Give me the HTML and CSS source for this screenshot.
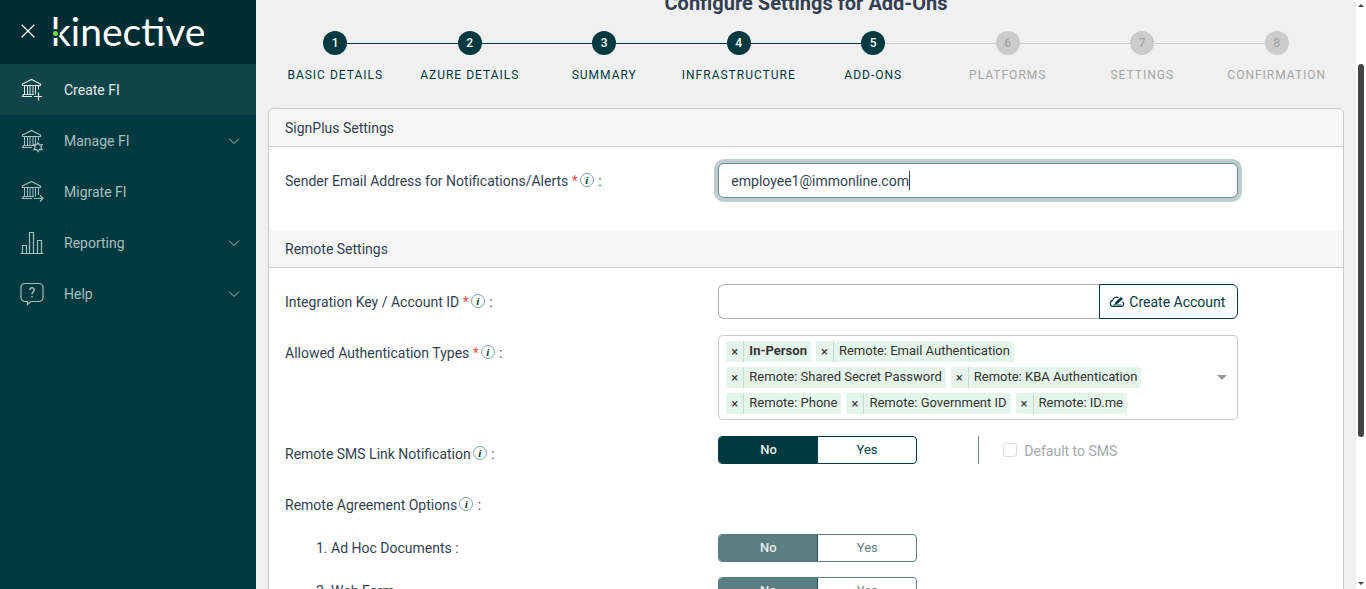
FILE: index.html
```html
<!DOCTYPE html>
<html lang="en">
<head>
    <meta charset="UTF-8">
    <meta name="viewport" content="width=device-width, initial-scale=1.0">
    <title>Create FI - Add-Ons</title>
    <link rel="stylesheet" href="styles.css">
</head>
<body>
    <!-- shared icon shapes -->
    <svg class="sprite" aria-hidden="true">
        <symbol id="bank" viewBox="0 0 24 25">
            <path d="M2.5 8.5V7L11.5 2.5L20.5 7V8.5H2.5Z"/>
            <path d="M4.5 8.500v9M7.500 8.500v9M10 8.500v9M13 8.500v9M15.500 8.500v9M18.500 8.500v4" stroke-width="1"/>
            <path d="M14 17.500H3.500L2.500 19.500H12"/>
        </symbol>
        <symbol id="chevron" viewBox="0 0 12 8">
            <path d="M1 1.5l5 5 5-5"/>
        </symbol>
    </svg>

    <div class="layout">
        <aside class="sidebar">
            <div class="brand">
                <button class="close-btn" type="button" aria-label="Close menu">
                    <svg width="14" height="14" viewBox="0 0 14 14"><path d="M0.7 0.7l12.6 12.6M13.3 0.7L0.7 13.3"/></svg>
                </button>
                <a class="logo" href="#">kinective<span class="logo-dot"></span></a>
            </div>
            <nav class="menu">
                <a class="menu-item active" href="#">
                    <svg class="menu-icon" viewBox="0 0 24 25"><use href="#bank"/><path d="M14 19.500h8M18.500 15.500v8"/></svg>
                    <span>Create FI</span>
                </a>
                <a class="menu-item" href="#">
                    <svg class="menu-icon" viewBox="0 0 24 25"><use href="#bank"/><path d="M18 14.500l1.400 2.300 2.700-.1-1.300 2.400 1.300 2.400-2.700-.1-1.400 2.300-1.400-2.300-2.700.1 1.300-2.400-1.300-2.400 2.700.1z"/></svg>
                    <span>Manage FI</span>
                    <svg class="chevron" viewBox="0 0 12 8"><use href="#chevron"/></svg>
                </a>
                <a class="menu-item" href="#">
                    <svg class="menu-icon" viewBox="0 0 24 25"><use href="#bank"/><path d="M18.500 12v4M14 19.500h9M20 16.500l3 3-3 3"/></svg>
                    <span>Migrate FI</span>
                </a>
                <a class="menu-item" href="#">
                    <svg class="menu-icon" viewBox="0 0 24 25"><path d="M.5 23.500h23M2.500 23.500v-8h4v8M9.500 23.500v-21h4v21M17.500 23.500v-13h4v13"/></svg>
                    <span>Reporting</span>
                    <svg class="chevron" viewBox="0 0 12 8"><use href="#chevron"/></svg>
                </a>
                <a class="menu-item" href="#">
                    <svg class="menu-icon" viewBox="0 0 24 25"><path d="M5 2.500h14a4 4 0 0 1 4 4v10a4 4 0 0 1-4 4h-8L7.500 23.500v-3H5a4 4 0 0 1-4-4v-10a4 4 0 0 1 4-4z"/><path d="M9.800 9a2.200 2.200 0 1 1 3.600 1.600q-1.400 1-1.400 2.600M12 15v1.500" stroke-width="1.500"/></svg>
                    <span>Help</span>
                    <svg class="chevron" viewBox="0 0 12 8"><use href="#chevron"/></svg>
                </a>
            </nav>
        </aside>

        <main class="content">
            <h1 class="page-title">Configure Settings for Add-Ons</h1>

            <ol class="steps">
                <li class="step done"><span class="step-number">1</span>Basic Details</li>
                <li class="step done"><span class="step-number">2</span>Azure Details</li>
                <li class="step done"><span class="step-number">3</span>Summary</li>
                <li class="step done"><span class="step-number">4</span>Infrastructure</li>
                <li class="step done"><span class="step-number">5</span>Add-Ons</li>
                <li class="step"><span class="step-number">6</span>Platforms</li>
                <li class="step"><span class="step-number">7</span>Settings</li>
                <li class="step"><span class="step-number">8</span>Confirmation</li>
            </ol>

            <form class="card">
                <h2 class="card-header">SignPlus Settings</h2>
                <div class="card-body">
                    <div class="row">
                        <label class="row-label" for="sender">Sender Email Address for Notifications/Alerts <span class="required">*</span><span class="info">i</span> :</label>
                        <div class="field focused">
                            <input class="text-input" id="sender" type="email" value="employee1@immonline.com">
                            <span class="caret"></span>
                        </div>
                    </div>
                </div>

                <h2 class="card-header">Remote Settings</h2>
                <div class="card-body">
                    <div class="row">
                        <label class="row-label" for="account">Integration Key / Account ID <span class="required">*</span><span class="info">i</span> :</label>
                        <div class="field input-group">
                            <input class="text-input" id="account" type="text">
                            <button class="create-btn" type="button">
                                <svg width="16" height="12" viewBox="0 0 16 12">
                                    <path d="M9.500 1.700A4 4 0 0 0 3.600 4.300 3.200 3.200 0 0 0 3.800 10.500H12.300A2.500 2.500 0 0 0 13.400 5.800" fill="none" stroke="currentColor" stroke-width="1.200"/>
                                    <path d="M5.500 8.800l1-2.700L11.900 1l2.200 1.700-5.500 5.100z" fill="currentColor"/>
                                    <path d="M4 9h8.500" stroke="currentColor"/>
                                </svg>
                                Create Account
                            </button>
                        </div>
                    </div>

                    <div class="row">
                        <span class="row-label" id="auth-label">Allowed Authentication Types <span class="required">*</span><span class="info">i</span> :</span>
                        <div class="field multi-select" role="group" aria-labelledby="auth-label">
                            <ul class="chips">
                                <li class="chip locked"><button type="button">×</button><span>In-Person</span></li>
                                <li class="chip"><button type="button">×</button><span>Remote: Email Authentication</span></li>
                                <li class="chip"><button type="button">×</button><span>Remote: Shared Secret Password</span></li>
                                <li class="chip"><button type="button">×</button><span>Remote: KBA Authentication</span></li>
                                <li class="chip"><button type="button">×</button><span>Remote: Phone</span></li>
                                <li class="chip"><button type="button">×</button><span>Remote: Government ID</span></li>
                                <li class="chip"><button type="button">×</button><span>Remote: ID.me</span></li>
                            </ul>
                            <button class="open-btn" type="button" aria-label="Show options"></button>
                        </div>
                    </div>

                    <div class="row">
                        <span class="row-label">Remote SMS Link Notification<span class="info">i</span> :</span>
                        <div class="field split">
                            <div class="toggle">
                                <button class="selected" type="button">No</button>
                                <button type="button">Yes</button>
                            </div>
                            <label class="sms-default"><input type="checkbox" disabled><span>Default to SMS</span></label>
                        </div>
                    </div>

                    <div class="row">
                        <span class="row-label">Remote Agreement Options<span class="info">i</span> :</span>
                    </div>

                    <div class="sub-rows">
                        <div class="row">
                            <span class="sub-label">1. Ad Hoc Documents :</span>
                            <div class="toggle disabled">
                                <button class="selected" type="button" disabled>No</button>
                                <button type="button" disabled>Yes</button>
                            </div>
                        </div>
                        <div class="row">
                            <span class="sub-label">2. Web Form</span>
                            <div class="toggle disabled">
                                <button class="selected" type="button" disabled>No</button>
                                <button type="button" disabled>Yes</button>
                            </div>
                        </div>
                    </div>
                </div>
            </form>
        </main>

        <div class="scrollbar">
            <span class="arrow-up"></span>
            <div class="track"><div class="thumb"></div></div>
            <span class="arrow-down"></span>
        </div>
    </div>
</body>
</html>
```

FILE: styles.css
```css
* {
    box-sizing: border-box;
}

body {
    margin: 0;
    font-family: Roboto, "Liberation Sans", sans-serif;
    font-size: 14px;
    line-height: 21px;
    color: #343f52;
    background-color: #f0f0f0;
}

button,
input {
    font: inherit;
    color: inherit;
}

button {
    padding: 0;
    border: none;
    background: none;
    cursor: pointer;
}

a {
    color: inherit;
    text-decoration: none;
}

ol,
ul {
    margin: 0;
    padding: 0;
    list-style: none;
}

.sprite {
    display: none;
}

.layout {
    display: flex;
    height: 100vh;
    overflow: hidden;
}

/* Sidebar */
.sidebar {
    flex: 0 0 256px;
    background-color: #003a40;
    color: #a6bdbf;
}

.brand {
    display: flex;
    align-items: center;
    gap: 16px;
    height: 64px;
    padding: 0 0 2px 21px;
    background-color: #002c34;
    color: #fff;
}

.close-btn {
    display: flex;
}

.close-btn svg {
    fill: none;
    stroke: #fff;
    stroke-width: 1.3;
}

.logo {
    position: relative;
    font-family: Lato, sans-serif;
    font-size: 39px;
    line-height: 62px;
}

/* green node on the stem of the k */
.logo-dot {
    position: absolute;
    left: 0;
    top: 29px;
    width: 9px;
    height: 9px;
    border: 2px solid #002c34;
    border-radius: 50%;
    background-color: #6fdc4b;
}

.menu-item {
    display: flex;
    align-items: center;
    gap: 20px;
    height: 51px;
    padding: 0 16px 0 20px;
    line-height: 22px;
}

.menu-item span {
    padding-top: 1px;
}

.menu-item.active {
    background-color: #0f4449;
    color: #e3eaeb;
}

.menu-icon {
    width: 24px;
    height: 25px;
    fill: none;
    stroke: currentColor;
    stroke-width: 1.2;
}

.chevron {
    width: 12px;
    height: 8px;
    margin-left: auto;
    fill: none;
    stroke: currentColor;
    stroke-width: 1;
}

/* Page */
.content {
    flex: 1;
    min-width: 0;
    padding: 0 12px;
}

.page-title {
    margin: -9px 0 16px;
    font-size: 20px;
    line-height: 24px;
    font-weight: 700;
    text-align: center;
}

.steps {
    display: flex;
    margin-bottom: 22px;
}

.step {
    position: relative;
    flex: 1;
    display: flex;
    flex-direction: column;
    align-items: center;
    gap: 10px;
    font-size: 12px;
    letter-spacing: 1px;
    text-transform: uppercase;
    color: #a6a6a6;
}

.step-number {
    position: relative;
    z-index: 1;
    width: 24px;
    height: 24px;
    border-radius: 50%;
    background-color: #ccc;
    line-height: 25px;
    letter-spacing: 0;
    font-weight: 500;
    text-align: center;
}

.step::before {
    content: "";
    position: absolute;
    top: 12px;
    right: 50%;
    width: 100%;
    height: 1px;
    background-color: #ccc;
}

.step:first-child::before {
    display: none;
}

.step.done {
    color: #003a40;
}

.step.done::before,
.step.done .step-number {
    background-color: #003a40;
}

.step.done .step-number {
    color: #fff;
}

/* Card */
.card {
    border: 1px solid #c9cbce;
    border-radius: 6px 6px 0 0;
    background-color: #fff;
    overflow: hidden;
}

.card-header {
    margin: 0;
    padding: 9px 16px 7px;
    border-bottom: 1px solid #c9cbce;
    background-color: #f7f7f7;
    font-size: 14px;
    line-height: 21px;
    font-weight: 400;
}

.card-body {
    display: flex;
    flex-direction: column;
    gap: 16px;
    padding: 16px 18px 32px 16px;
}

.row {
    display: grid;
    grid-template-columns: 5fr 6fr 1fr;
    align-items: start;
}

.row-label {
    padding: 8px 0 6px;
}

.required {
    color: #e2504c;
}

.info {
    display: inline-block;
    width: 14px;
    height: 14px;
    margin: 0 1px 0 2px;
    border: 1px solid #7f9ea3;
    border-radius: 50%;
    font: italic bold 11px/12px "Liberation Serif", serif;
    text-align: center;
    vertical-align: 2px;
    color: #003a40;
}

.field {
    position: relative;
    min-width: 0;
}

.text-input {
    display: block;
    width: 100%;
    height: 35px;
    padding: 0 12px;
    border: 1px solid #aab2bd;
    border-radius: 6px;
    background-color: #fff;
    outline: none;
}

.focused .text-input {
    border-color: #668d92;
    box-shadow: 0 0 0 4px #bfcdcf;
}

.caret {
    position: absolute;
    left: 191px;
    top: 8px;
    width: 1px;
    height: 19px;
    background-color: #343f52;
}

.input-group {
    display: flex;
}

.input-group .text-input {
    flex: 1;
    min-width: 0;
    border-right: none;
    border-radius: 6px 0 0 6px;
}

.create-btn {
    display: flex;
    align-items: center;
    gap: 4px;
    padding: 1px 12px 0 9px;
    border: 1px solid #003a40;
    border-radius: 0 6px 6px 0;
    color: #003a40;
}

/* Multi select */
.multi-select {
    display: flex;
    align-items: center;
    padding: 5px 10px 5px 7px;
    border: 1px solid #ccc;
    border-radius: 4px;
}

.chips {
    flex: 1;
    display: flex;
    flex-wrap: wrap;
    gap: 5px;
    font-size: 13px;
    color: #333;
}

.chip {
    display: flex;
    height: 21px;
    border-radius: 2px;
    background-color: #e5f5ec;
}

.chip button {
    width: 18px;
    border-right: 1px solid #c3ddd0;
    line-height: 21px;
}

.chip span {
    padding: 0 4px 0 5px;
    line-height: 20px;
}

.chip.locked {
    font-weight: 700;
}

.chip.locked button {
    font-weight: 400;
}

.open-btn {
    border: 5px solid transparent;
    border-top-color: #999;
    border-bottom: none;
}

/* Toggles */
.split {
    display: grid;
    grid-template-columns: 1fr 1fr;
}

.toggle {
    display: flex;
    width: 199px;
    height: 28px;
    border: 1px solid #003a40;
    border-radius: 4px;
    overflow: hidden;
    font-size: 13px;
    line-height: 20px;
    color: #003a40;
}

.toggle button {
    flex: 1;
    padding-bottom: 1px;
}

.toggle .selected {
    background-color: #003a40;
    color: #e5ebec;
    font-weight: 500;
}

.toggle.disabled {
    border-color: #5b7e82;
    color: #5b7e82;
}

.toggle.disabled .selected {
    border-right: 1px solid #1f5156;
    background-color: #5b7e82;
}

.sms-default {
    display: flex;
    align-items: center;
    gap: 7px;
    height: 28px;
    padding-left: 24px;
    border-left: 1px solid #708090;
    color: #a4a8b0;
}

.sms-default span {
    padding-top: 2px;
}

.sms-default input {
    appearance: none;
    width: 14px;
    height: 14px;
    margin: 0;
    border: 1px solid #dcdcdc;
    border-radius: 3px;
}

.sub-rows {
    display: flex;
    flex-direction: column;
    gap: 15px;
    margin-top: -4px;
}

.sub-label {
    padding-left: 31px;
    line-height: 28px;
}

/* Scrollbar */
.scrollbar {
    display: flex;
    flex-direction: column;
    align-items: center;
    width: 10px;
    padding: 4px 0;
    background-color: #fff;
}

.track {
    flex: 1;
    width: 6px;
    padding-top: 57px;
}

.thumb {
    height: 72%;
    border-radius: 3px;
    background-color: #444;
}

.arrow-up,
.arrow-down {
    border: 3px solid transparent;
}

.arrow-up {
    border-top: none;
    border-bottom-color: #444;
}

.arrow-down {
    border-bottom: none;
    border-top-color: #444;
}
```
